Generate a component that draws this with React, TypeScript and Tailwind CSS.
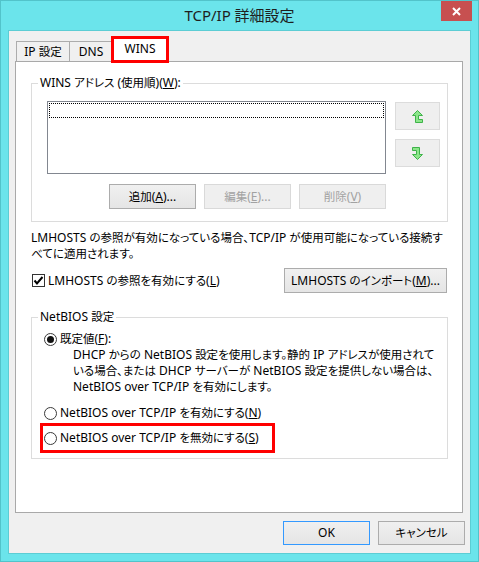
import React from "react";

const CJK = /([\u3000-\u30ff\u4e00-\u9fff\uff00-\uffef]+)/;

function J({ t }: { t: string }) {
  const parts = t.split(CJK);
  return (
    <>
      {parts.map((p, i) =>
        i % 2 === 1 ? (
          <span key={i} className="text-[11.5px] [font-feature-settings:'palt']">
            {p}
          </span>
        ) : (
          <React.Fragment key={i}>{p}</React.Fragment>
        )
      )}
    </>
  );
}

function UpArrow({ down }: { down?: boolean }) {
  return (
    <svg width="11" height="13" viewBox="0 0 11 13" className={down ? "rotate-180" : ""}>
      <path
        d="M5.5 0.5 L10.5 5.5 L6.5 5.5 L6.5 9.5 L10.5 9.5 L10.5 12.5 L3.5 12.5 L3.5 5.5 L0.5 5.5 Z"
        fill="#8ce68a"
        stroke="#3fb34a"
        strokeWidth="1"
        strokeLinejoin="miter"
      />
    </svg>
  );
}

function Radio({ checked }: { checked?: boolean }) {
  return (
    <span className="w-[13px] h-[13px] rounded-full border border-[#3a3a3a] bg-white flex items-center justify-center shrink-0">
      {checked && <span className="w-[7px] h-[7px] rounded-full bg-[#111]" />}
    </span>
  );
}

export default function App() {
  return (
    <div className="w-[479px] h-[562px] bg-[#6be4eb] border border-[#52c3ca] flex flex-col text-[12px] text-black [font-family:'Noto_Sans','Noto_Sans_CJK_JP',sans-serif]">
      {/* title bar */}
      <div className="h-[29px] relative flex items-center justify-center shrink-0">
        <span className="text-[15px] text-[#1e1e1e] leading-none">TCP/IP 詳細設定</span>
        <div className="absolute top-0 right-[6px] w-[31px] h-[20px] bg-[#c75050] flex items-center justify-center">
          <svg width="9" height="9" viewBox="0 0 9 9">
            <path d="M1 1 L8 8 M8 1 L1 8" stroke="#fff" strokeWidth="2" />
          </svg>
        </div>
      </div>

      {/* client */}
      <div className="mx-[7px] h-[524px] bg-[#f0f0f0] border border-[#5ccdd4] flex flex-col">
        {/* tabs */}
        <div className="flex items-end h-[30px] pl-[7px] relative z-10 shrink-0">
          <div className="w-[54px] h-[20px] border border-b-0 border-[#acacac] bg-[#f0f0f0] flex items-center justify-center leading-none">
            <span>
              <J t="IP 設定" />
            </span>
          </div>
          <div className="-ml-px w-[44px] h-[20px] border border-b-0 border-[#acacac] bg-[#f0f0f0] flex items-center justify-center leading-none">
            <span>DNS</span>
          </div>
          <div className="-ml-px w-[56px] h-[25px] mb-[-1px] border border-b-0 border-[#acacac] bg-white flex items-center justify-center leading-none relative pb-[2px]">
            <span>WINS</span>
            <span className="absolute -left-[2px] -top-[2px] w-[58px] h-[27px] border-[3px] border-[#ff0000]" />
          </div>
        </div>

        {/* panel */}
        <div className="ml-[6px] w-[448px] h-[452px] border border-[#a9a9a9] bg-white flex flex-col pl-[15px] shrink-0">
          <fieldset className="mt-[13px] w-[417px] h-[147px] border border-[#dcdcdc]">
            <legend className="ml-[6px] px-[2px] leading-[16px]">
              <J t="WINS アドレス (使用順)(" />
              <u>W</u>):
            </legend>
            <div className="flex pl-[15px] mt-[10px]">
              <div className="w-[339px] h-[73px] border border-[#828790] bg-white">
                <div className="mx-[1px] mt-[1px] h-[15px] border border-dotted border-black" />
              </div>
              <div className="ml-[9px] mt-[1px] flex flex-col gap-[9px]">
                <div className="w-[45px] h-[28px] bg-[#efefef] border border-[#dcdcdc] flex items-center justify-center">
                  <UpArrow />
                </div>
                <div className="w-[45px] h-[28px] bg-[#efefef] border border-[#dcdcdc] flex items-center justify-center">
                  <UpArrow down />
                </div>
              </div>
            </div>
            <div className="flex gap-[8px] pl-[77px] mt-[10px]">
              <div className="w-[87px] h-[25px] border border-[#acacac] bg-linear-to-b from-[#f0f0f0] to-[#e5e5e5] flex items-center justify-center">
                <span>
                  <J t="追加(" />
                  <u>A</u>)...
                </span>
              </div>
              <div className="w-[87px] h-[25px] border border-[#d9d9d9] bg-[#efefef] text-[#a2a2a2] flex items-center justify-center">
                <span>
                  <J t="編集(" />
                  <u>E</u>)...
                </span>
              </div>
              <div className="w-[87px] h-[25px] border border-[#d9d9d9] bg-[#efefef] text-[#a2a2a2] flex items-center justify-center">
                <span>
                  <J t="削除(" />
                  <u>V</u>)
                </span>
              </div>
            </div>
          </fieldset>

          <div className="mt-[8px] whitespace-nowrap leading-[16px]">
            <div>
              <J t="LMHOSTS の参照が有効になっている場合、TCP/IP が使用可能になっている接続す" />
            </div>
            <div>
              <J t="べてに適用されます。" />
            </div>
          </div>

          <div className="mt-[6px] w-[416px] h-[25px] flex items-center justify-between">
            <div className="flex items-center">
              <span className="ml-[1px] w-[13px] h-[13px] border border-[#333] bg-white flex items-center justify-center">
                <svg width="11" height="11" viewBox="0 0 11 11">
                  <path d="M1.5 5.5 L4 8.5 L9.5 2" stroke="#000" strokeWidth="2" fill="none" />
                </svg>
              </span>
              <span className="ml-[3px]">
                <J t="LMHOSTS の参照を有効にする(" />
                <u>L</u>)
              </span>
            </div>
            <div className="w-[163px] h-[25px] border border-[#acacac] bg-linear-to-b from-[#f0f0f0] to-[#e5e5e5] flex items-center justify-center">
              <span>
                <J t="LMHOSTS のインポート(" />
                <u>M</u>)...
              </span>
            </div>
          </div>

          <fieldset className="mt-[16px] w-[417px] h-[150px] border border-[#dcdcdc]">
            <legend className="ml-[6px] px-[2px] leading-[16px]">
              <J t="NetBIOS 設定" />
            </legend>
            <div className="mt-[6px] pl-[12px] h-[16px] flex items-center">
              <Radio checked />
              <span className="ml-[3px]">
                <J t="既定値(" />
                <u>F</u>):
              </span>
            </div>
            <div className="pl-[41px] leading-[16px] whitespace-nowrap">
              <div>
                <J t="DHCP からの NetBIOS 設定を使用します。静的 IP アドレスが使用されて" />
              </div>
              <div>
                <J t="いる場合、または DHCP サーバーが NetBIOS 設定を提供しない場合は、" />
              </div>
              <div>
                <J t="NetBIOS over TCP/IP を有効にします。" />
              </div>
            </div>
            <div className="mt-[10px] pl-[12px] h-[16px] flex items-center">
              <Radio />
              <span className="ml-[3px]">
                <J t="NetBIOS over TCP/IP を有効にする(" />
                <u>N</u>)
              </span>
            </div>
            <div className="mt-[9px] ml-[12px] h-[16px] flex items-center relative">
              <Radio />
              <span className="ml-[3px]">
                <J t="NetBIOS over TCP/IP を無効にする(" />
                <u>S</u>)
              </span>
              <span className="absolute -left-[4px] -top-[7px] w-[235px] h-[30px] border-[3px] border-[#ff0000]" />
            </div>
          </fieldset>
        </div>

        {/* bottom buttons */}
        <div className="mt-[8px] flex justify-end gap-[8px] pr-[5px]">
          <div className="w-[87px] h-[24px] border border-[#3399ff] bg-linear-to-b from-[#f0f0f0] to-[#e5e5e5] flex items-center justify-center">
            <span>OK</span>
          </div>
          <div className="w-[87px] h-[24px] border border-[#acacac] bg-linear-to-b from-[#f0f0f0] to-[#e5e5e5] flex items-center justify-center">
            <span>
              <J t="キャンセル" />
            </span>
          </div>
        </div>
      </div>
    </div>
  );
}
